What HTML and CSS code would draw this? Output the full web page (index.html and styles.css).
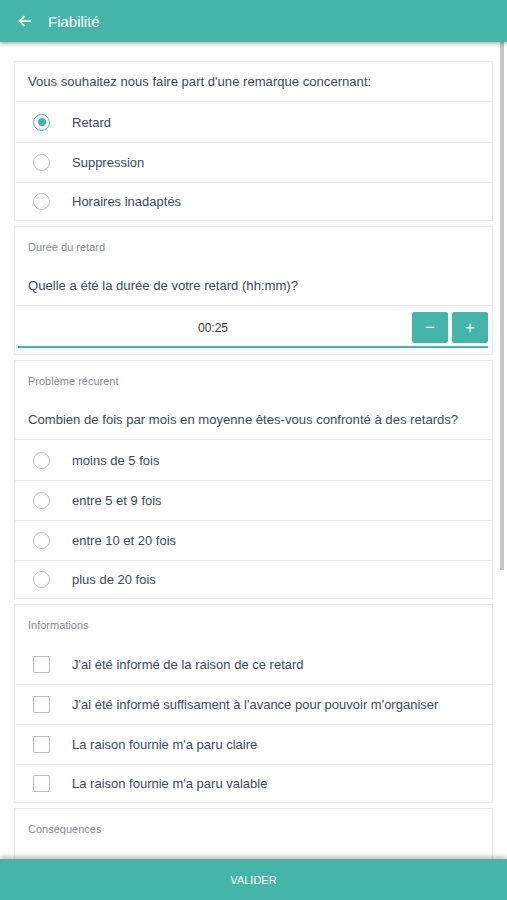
FILE: index.html
```html
<!DOCTYPE html>
<html lang="fr">
<head>
  <meta charset="UTF-8" />
  <meta name="viewport" content="width=device-width, initial-scale=1.0"/>
  <title>Fiabilité</title>
  <link rel="stylesheet" href="styles.css">
</head>
<body>
  <header class="topbar">
    <span class="back">
      <svg width="14" height="14" viewBox="0 0 16 16"><path d="M15 8H2M7.5 2.5L2 8l5.5 5.5" fill="none" stroke="#fff" stroke-width="2"/></svg>
    </span>
    <h1>Fiabilité</h1>
  </header>

  <main class="content">
    <!-- type de remarque -->
    <section class="card">
      <div class="question sep">Vous souhaitez nous faire part d'une remarque concernant:</div>
      <label class="row first"><span class="radio checked"></span>Retard</label>
      <label class="row"><span class="radio"></span>Suppression</label>
      <label class="row"><span class="radio"></span>Horaires inadaptés</label>
    </section>

    <!-- durée -->
    <section class="card">
      <div class="label">Durée du retard</div>
      <div class="question sep">Quelle a été la durée de votre retard (hh:mm)?</div>
      <div class="stepper">
        <div class="value">00:25</div>
        <button class="step">&minus;</button>
        <button class="step">+</button>
      </div>
    </section>

    <!-- récurrence -->
    <section class="card">
      <div class="label">Problème récurent</div>
      <div class="question sep">Combien de fois par mois en moyenne êtes-vous confronté à des retards?</div>
      <label class="row first"><span class="radio"></span>moins de 5 fois</label>
      <label class="row"><span class="radio"></span>entre 5 et 9 fois</label>
      <label class="row"><span class="radio"></span>entre 10 et 20 fois</label>
      <label class="row"><span class="radio"></span>plus de 20 fois</label>
    </section>

    <!-- informations -->
    <section class="card">
      <div class="label">Informations</div>
      <label class="row first"><span class="check"></span>J'ai été informé de la raison de ce retard</label>
      <label class="row"><span class="check"></span>J'ai été informé suffisament à l'avance pour pouvoir m'organiser</label>
      <label class="row"><span class="check"></span>La raison fournie m'a paru claire</label>
      <label class="row"><span class="check"></span>La raison fournie m'a paru valable</label>
    </section>

    <!-- conséquences (suite sous le bouton) -->
    <section class="card">
      <div class="label">Conséquences</div>
      <div class="more"></div>
    </section>
  </main>

  <div class="scroll-thumb"></div>

  <footer class="bottombar">VALIDER</footer>
</body>
</html>
```

FILE: styles.css
```css
html, body {
  margin: 0;
  padding: 0;
  height: 100%;
}
body {
  font-family: "Liberation Sans", Arial, sans-serif;
  color: #3e4a5b;
  background: #fff;
  display: flex;
  flex-direction: column;
  overflow: hidden;
  position: relative;
}
.topbar {
  height: 42px;
  flex-shrink: 0;
  background: #45b5a9;
  display: flex;
  align-items: center;
  box-shadow: 0 2px 4px rgba(0, 0, 0, 0.3);
  position: relative;
  z-index: 2;
}
.back {
  width: 14px;
  height: 14px;
  margin-left: 18px;
  display: flex;
}
.topbar h1 {
  margin: 0 0 0 16px;
  font-size: 15px;
  font-weight: normal;
  color: #fff;
}
.content {
  flex: 1;
  overflow: hidden;
  padding: 19px 14px 0 14px;
  display: flex;
  flex-direction: column;
  gap: 5px;
}
.scroll-thumb {
  position: absolute;
  top: 42px;
  right: 3px;
  width: 4px;
  height: 528px;
  background: #c6c6c6;
  z-index: 1;
}
.card {
  border: 1px solid #ececec;
  background: #fff;
  flex-shrink: 0;
}
.label {
  height: 39px;
  display: flex;
  align-items: center;
  padding: 1px 13px 0;
  box-sizing: border-box;
  font-size: 11px;
  color: #858b92;
}
.question {
  height: 39px;
  display: flex;
  align-items: center;
  padding: 0 13px;
  font-size: 13.1px;
}
.sep {
  border-bottom: 1px solid #ececec;
}
.row {
  height: 39px;
  display: flex;
  align-items: center;
  padding-left: 18px;
  font-size: 13px;
  border-top: 1px solid #ececec;
}
.row.first {
  border-top: none;
  height: 40px;
}
.row:last-child {
  height: 37px;
}
.radio {
  width: 15px;
  height: 15px;
  border: 1.5px solid #bdbdbd;
  border-radius: 50%;
  margin-right: 22px;
  display: flex;
  align-items: center;
  justify-content: center;
}
.radio.checked {
  border-color: #45b5a9;
}
.radio.checked::after {
  content: "";
  width: 8px;
  height: 8px;
  border-radius: 50%;
  background: #45b5a9;
}
.check {
  width: 15px;
  height: 15px;
  border: 1.5px solid #bdbdbd;
  border-radius: 2px;
  margin-right: 22px;
}
.stepper {
  display: flex;
  align-items: center;
  gap: 4px;
  margin: 6px 4px 6px 3px;
  padding-bottom: 3px;
  border-bottom: 2px solid #45b5a9;
}
.value {
  flex: 1;
  text-align: center;
  font-size: 12px;
  color: #333;
}
.step {
  width: 36px;
  height: 31px;
  border: none;
  border-radius: 2px;
  background: #45b5a9;
  color: #fff;
  font-family: "Liberation Sans", Arial, sans-serif;
  font-size: 17px;
  padding: 0;
}
.more {
  height: 80px;
}
.bottombar {
  height: 41px;
  flex-shrink: 0;
  background: #45b5a9;
  color: #fff;
  font-size: 11px;
  display: flex;
  align-items: center;
  justify-content: center;
  box-shadow: 0 -2px 5px rgba(0, 0, 0, 0.28);
  position: relative;
  z-index: 2;
}
```
